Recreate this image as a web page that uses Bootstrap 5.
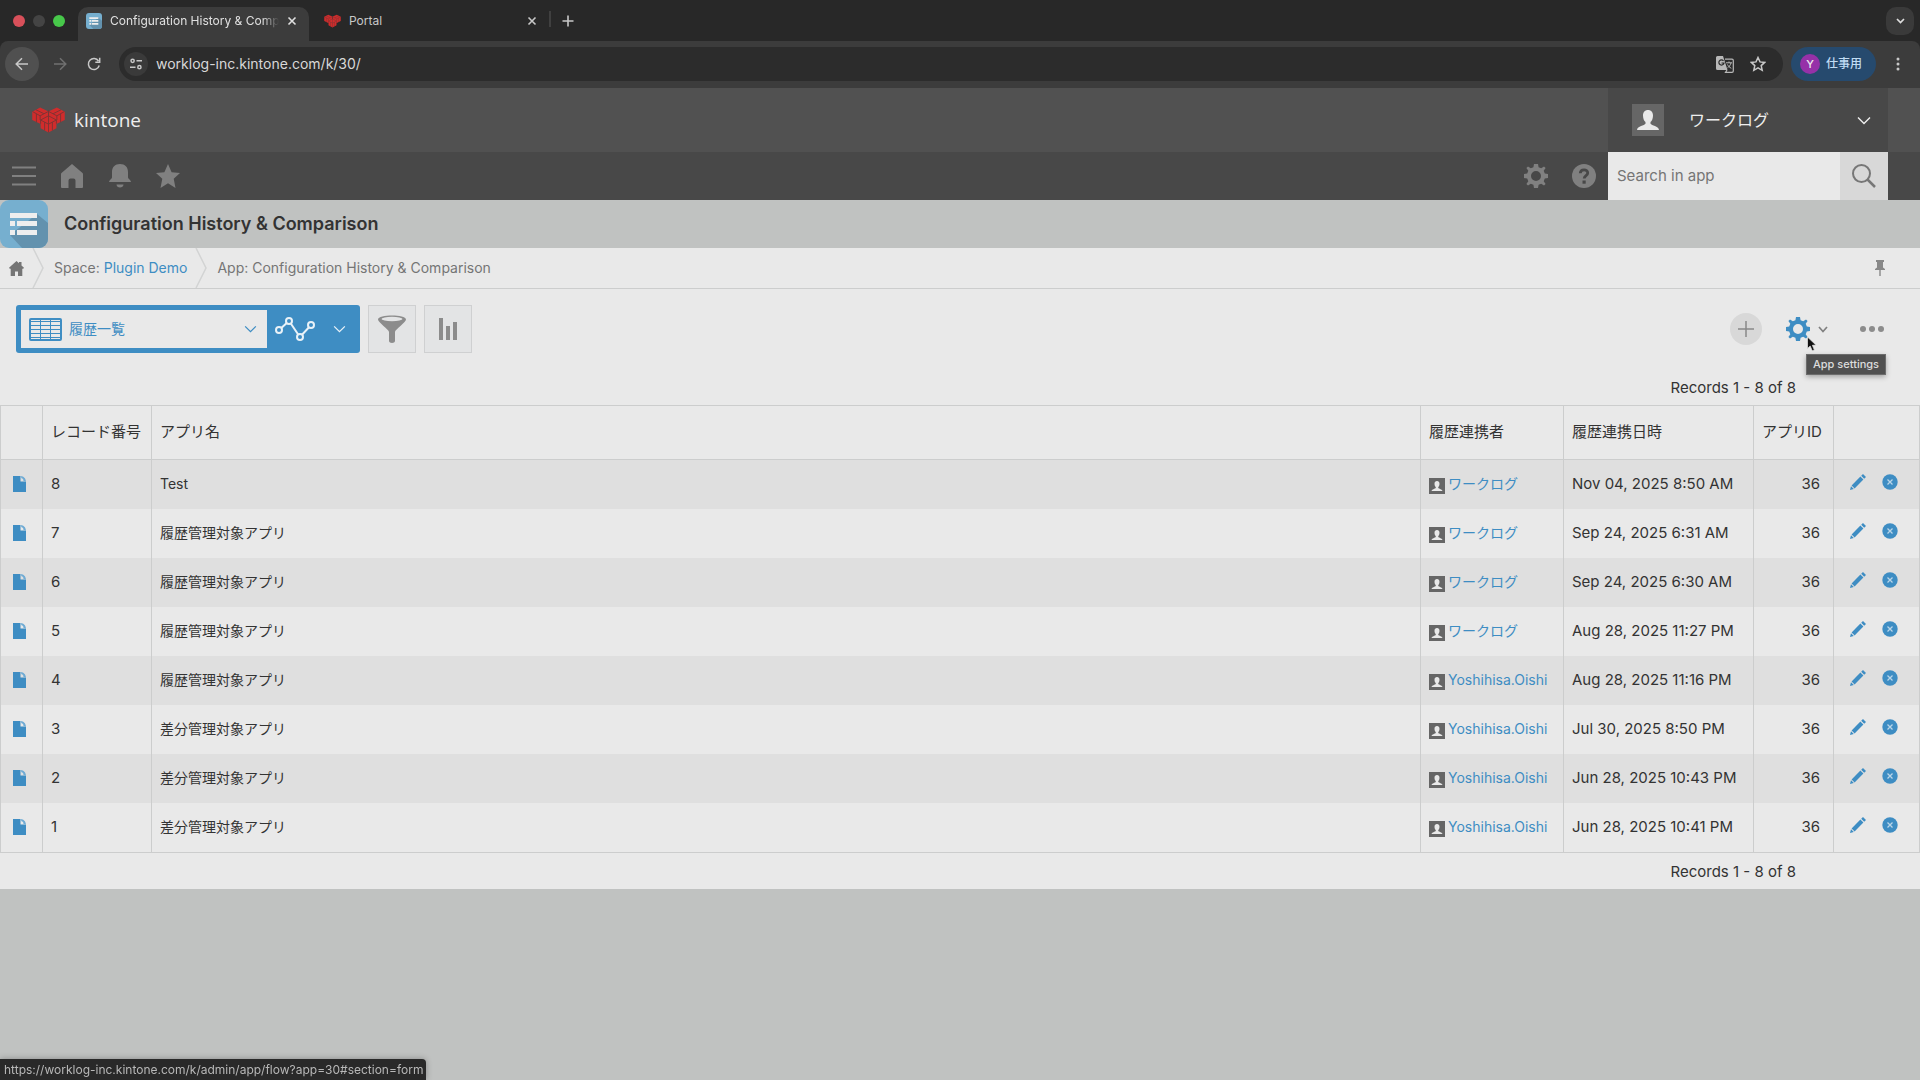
<!DOCTYPE html>
<html lang="ja">
<head>
<meta charset="utf-8">
<meta name="viewport" content="width=device-width, initial-scale=1">
<title>Configuration History &amp; Comparison</title>
<link href="https://cdn.jsdelivr.net/npm/bootstrap@5.3.0/dist/css/bootstrap.min.css" rel="stylesheet">
<style>
  :root { --kt-blue: #3e8dc3; --kt-panel: #e9e9e9; --kt-line: #cccdcd; --kt-grey: #c0c2c1; }
  body { font-family: Inter, "Noto Sans CJK JP", sans-serif; font-size: 14px; line-height: 20px; background: var(--kt-grey); color: #333; min-height: 100vh; }
  svg { display: block; flex: none; }
  button { border: 0; background: none; padding: 0; color: inherit; font: inherit; }
  a { color: var(--kt-blue); text-decoration: none; }

  .tabstrip { background: #282828; height: 41px; color: #c8c8c8; font-size: 12px; padding: 7px 6px 0 13px; }
  .lights { gap: 8px; height: 27px; width: 65px; }
  .light { width: 12px; height: 12px; border-radius: 50%; background: #444; }
  .light-close { background: #d8505a; }
  .light-zoom { background: #47c84a; }
  .browser-tab { height: 34px; padding: 0 8px 7px; gap: 8px; }
  .tab-current { width: 231px; background: #3c3c3c; border-radius: 10px 10px 0 0; color: #e0e0e0; }
  .tab-other { width: 240px; padding-left: 15px; }
  .tab-title { overflow: hidden; white-space: nowrap; flex: 1; min-width: 0; text-align: left; }
  .tab-current .tab-title { -webkit-mask-image: linear-gradient(90deg, #000 90%, transparent); mask-image: linear-gradient(90deg, #000 90%, transparent); }
  .tab-rule { width: 2px; height: 16px; background: #404040; margin-bottom: 7px; }
  .tab-new { width: 34px; height: 27px; }
  .tab-list { width: 28px; height: 28px; border-radius: 10px; background: #3a3a3a; }

  .addressbar-back { background: #282828; }
  .addressbar { background: #3c3c3c; height: 47px; padding: 0 16px 1px 5px; border-radius: 8px 8px 0 0; color: #c8c8c8; }
  .round-btn { width: 34px; height: 34px; border-radius: 50%; }
  .round-btn.on { background: #505050; }
  .omnibox { background: #2c2c2c; height: 34px; border-radius: 17px; padding: 0 17px 0 5px; }
  .site-info { width: 24px; height: 24px; border-radius: 50%; background: #3a3a3a; }
  .omnibox input { background: none; border: 0; outline: 0; color: #d8d8d8; padding: 0; min-width: 0; }
  .profile { height: 34px; width: 85px; border-radius: 17px; background: #264a6e; color: #c0dcf4; font-size: 12px; font-weight: 500; padding-left: 9px; gap: 6px; }
  .profile-dot { width: 20px; height: 20px; border-radius: 50%; background: #9631a8; color: #eee; font-size: 11px; }

  .brandbar { background: #515151; height: 64px; padding: 0 32px 0 31px; color: #eee; }
  .brand { font-family: "Open Sans", sans-serif; font-size: 19px; color: #eee; gap: 8px; }
  .account { width: 280px; background: #484848; font-size: 16px; padding: 0 17px 0 24px; }
  .account .name { margin-left: 25px; }
  .navstrip { background: #484848; height: 48px; padding-right: 32px; color: #808080; }
  .nav-btn { width: 48px; height: 48px; }
  .searchbox { width: 280px; font-size: 15px; }
  .searchbox input { background: var(--kt-panel); border: 0; padding: 0 9px; outline: 0; min-width: 0; border-radius: 0; }
  .searchbox input::placeholder { color: #757575; opacity: 1; }
  .searchbox button { width: 48px; flex: none; background: #d8d8d8; color: #777; }

  .app-title { height: 48px; }
  .app-title h1 { font-size: 18px; line-height: 24px; font-weight: 600; margin: 0 0 0 16px; }
  .crumbs { background: var(--kt-panel); height: 41px; border-bottom: 1px solid var(--kt-line); font-size: 14px; color: #757575; padding-right: 30px; }
  .crumbs ol { list-style: none; margin: 0; padding: 0 0 0 9px; height: 40px; }
  .crumbs li { display: flex; align-items: center; line-height: 18px; }
  .crumbs .sep { margin: 0 10px 0 8px; }

  .panel-area { background: var(--kt-panel); }
  .viewbar { padding: 16px 36px 0 16px; gap: 8px; }
  .view-switch { background: var(--kt-blue); height: 48px; width: 344px; border-radius: 3px; padding: 5px 14px 5px 5px; color: #e9f2f8; }
  .view-pick { width: 246px; height: 38px; background: var(--kt-panel); color: var(--kt-blue); padding: 0 10px 0 8px; }
  .view-pick select { appearance: none; border: 0; background: none; color: inherit; font: inherit; padding: 0 0 0 7px; outline: 0; }
  .square-btn { width: 48px; height: 48px; background: #e3e4e5; border: 1px solid #cfd0d1; color: #8c8c8c; }
  .add-btn { width: 32px; height: 32px; border-radius: 50%; background: #d8d8d8; color: #888; }
  .count { font-size: 15px; padding: 0 124px 0 0; text-align: right; }
  .count-top { padding-top: 25px; padding-bottom: 7px; }
  .count-end { padding-top: 9px; padding-bottom: 7px; }
  .gear-wrap { position: relative; }
  .tip { position: absolute; top: 37px; left: 44px; z-index: 2; background: #505050; border: 1px solid #6c6c6c; color: #dcdcdc; font-size: 11px; font-weight: 500; line-height: 19px; padding: 0 6px; white-space: nowrap; box-shadow: 0 2px 5px rgba(0,0,0,.3); }
  .pointer { position: absolute; left: 44px; top: 19px; z-index: 3; }

  .records { width: 100%; table-layout: fixed; border-collapse: collapse; }
  .records th, .records td { border: 1px solid var(--kt-line); border-width: 0 1px; padding: 0 8px; }
  .records th { height: 54px; font-size: 15px; font-weight: 400; padding: 0 8px 2px; border-width: 1px; white-space: nowrap; }
  .records td { height: 49px; white-space: nowrap; padding-bottom: 1px; }
  .records tbody tr:nth-child(odd) { background: #dfdfdf; }
  .records tbody tr:last-child td { height: 50px; border-bottom-width: 1px; }
  .c-open { width: 42px; } .c-num { width: 109px; } .c-who { width: 143px; } .c-when { width: 190px; } .c-app { width: 80px; } .c-act { width: 86px; }
  .records td.num { text-align: right; padding-right: 13px; font-size: 15px; }
  .records td.txt { font-size: 15px; }
  .records td.open { padding-left: 12px; }
  .who { gap: 3px; }
  .acts { gap: 16px; padding: 0 0 3px 8px; color: var(--kt-blue); }

  .status-url { position: fixed; left: 0; bottom: 0; width: 426px; height: 21px; background: #292929; color: #b8b8b8; font-size: 12px; line-height: 21px; padding-left: 4px; border-top-right-radius: 4px; white-space: nowrap; box-shadow: 0 0 6px rgba(0,0,0,.3); }
</style>
</head>
<body>
<svg width="0" height="0" class="position-absolute" aria-hidden="true">
  <defs>
    <symbol id="i-x" viewBox="0 0 10 10"><path d="M1.500 1.500l7 7M8.500 1.500l-7 7" stroke="currentColor" stroke-width="1.600" fill="none"/></symbol>
    <symbol id="i-down" viewBox="0 0 14 9"><path d="M1 1.500l6 6 6-6" stroke="currentColor" stroke-width="1.400" fill="none"/></symbol>
    <symbol id="i-heart" viewBox="0 0 36 28">
      <g fill="#d02c2c"><path d="M9 .5L17.500 4.500V14L9 18 .5 14V5z"/><path d="M27 .5L35.500 5v9L27 18l-8.500-4V4.500z"/></g>
      <path d="M18 9.500l8.500 4.500v9L18 27.500 9.500 23v-9z" fill="#d02c2c"/>
      <path d="M1 5l8 4.500L17.500 5M9 9.500V14M35 5l-8 4.500L18.500 5M27 9.500V14M4.500 3l8.500 4.200M31.500 3L23 7.200M18 3.500v6M9.500 18v-4l8.500-4.500 8.500 4.500v4M9.500 14l8.500 4.500 8.500-4.500M18 9.500v18M5 7.500v9M31 7.500v9M13.800 16.200v9M22.200 16.200v9" stroke="#7d3333" stroke-width="1" fill="none"/>
    </symbol>
    <symbol id="i-app" viewBox="0 0 48 48">
      <rect width="48" height="48" rx="9" fill="#76afcf"/>
      <path d="M37 14l11 9v16a9 9 0 0 1-9 9H22L10 35z" fill="#6392ae"/>
      <path d="M10 13h27v5H10zM10 21h5v5h-5zM17 21h20v5H17zM10 30h5v5h-5zM17 30h20v5H17z" fill="#eee"/>
    </symbol>
    <symbol id="i-gear" viewBox="0 0 24 24"><path fill="currentColor" fill-rule="evenodd" d="M10 0h4l.6 3.200 2.600 1.100L20 2.400 21.600 4l-1.900 2.800 1.100 2.600L24 10v4l-3.200.6-1.100 2.600 1.900 2.800-1.600 1.600-2.800-1.900-2.600 1.100L14 24h-4l-.6-3.200-2.600-1.100L4 21.600 2.400 20l1.900-2.800-1.100-2.600L0 14v-4l3.200-.6 1.100-2.600L2.400 4 4 2.400l2.800 1.900 2.600-1.100zM12 7a5 5 0 1 0 0 10 5 5 0 0 0 0-10z"/></symbol>
    <symbol id="i-person" viewBox="0 0 32 32"><rect width="32" height="32" fill="#666"/><path fill="#e9e9e9" d="M16 6c3 0 5 2.200 5 5.500 0 3-1 5.300-2.500 6.500v1.800c1 1.800 8 2.200 8.500 6.200H5c.5-4 7.500-4.400 8.500-6.200V18C12 16.800 11 14.500 11 11.500 11 8.200 13 6 16 6z"/></symbol>
    <symbol id="i-file" viewBox="0 0 13 16"><path fill="var(--kt-blue)" d="M0 0h7.500v5.500H13V16H0z"/><path d="M7.500 0C11 .5 12.500 2 13 5.500L10.500 5c0-2-.8-2.600-2-2.800z" fill="#6fabd4"/></symbol>
    <symbol id="i-pencil" viewBox="0 0 16 16"><path fill="currentColor" d="M13 0l3 3-1.800 1.800-3-3zM10.400 2.600l3 3L4.600 14.400l-3-3zM1 12.200L3.800 15 0 16z"/></symbol>
    <symbol id="i-del" viewBox="0 0 16 16"><circle cx="8" cy="8" r="7.700" fill="currentColor"/><path d="M5.500 5.500l5 5M10.500 5.500l-5 5" stroke="#b9d5e8" stroke-width="1.300"/></symbol>
    <symbol id="i-sep" viewBox="0 0 12 40"><path d="M1 0l10 20L1 40" fill="none" stroke="#d2d3d3" stroke-width="1.500"/></symbol>
  </defs>
</svg>

<header>
  <div class="tabstrip d-flex align-items-start">
    <div class="lights d-flex align-items-center"><span class="light light-close"></span><span class="light"></span><span class="light light-zoom"></span></div>
    <div class="browser-tab tab-current d-flex align-items-center">
      <svg width="16" height="16"><use href="#i-app"/></svg>
      <span class="tab-title">Configuration History &amp; Comparison</span>
      <button type="button" aria-label="Close tab" class="me-1"><svg width="10" height="10"><use href="#i-x"/></svg></button>
    </div>
    <div class="browser-tab tab-other d-flex align-items-center">
      <svg width="17" height="14"><use href="#i-heart"/></svg>
      <span class="tab-title">Portal</span>
      <button type="button" aria-label="Close tab" class="me-1"><svg width="10" height="10"><use href="#i-x"/></svg></button>
    </div>
    <div class="d-flex align-items-center"><span class="tab-rule mt-1"></span>
      <button type="button" aria-label="New tab" class="tab-new d-flex align-items-center justify-content-center"><svg width="12" height="12" viewBox="0 0 12 12"><path d="M6 .5v11M.5 6h11" stroke="currentColor" stroke-width="1.600"/></svg></button>
    </div>
    <button type="button" aria-label="Search tabs" class="tab-list ms-auto d-flex align-items-center justify-content-center"><svg width="9" height="6" viewBox="0 0 9 6"><path d="M1 1l3.500 3.500L8 1" stroke="#ddd" stroke-width="1.700" fill="none"/></svg></button>
  </div>
  <div class="addressbar-back">
  <div class="addressbar d-flex align-items-center">
    <button type="button" aria-label="Back" class="round-btn on d-flex align-items-center justify-content-center"><svg width="14" height="14" viewBox="0 0 14 14"><path d="M13 7H1.500M7 1.200L1.200 7 7 12.800" stroke="currentColor" stroke-width="1.500" fill="none"/></svg></button>
    <button type="button" aria-label="Forward" class="round-btn ms-1 d-flex align-items-center justify-content-center"><svg width="14" height="14" viewBox="0 0 14 14"><path d="M1 7h11.500M7 1.200L12.800 7 7 12.800" stroke="#707070" stroke-width="1.500" fill="none"/></svg></button>
    <button type="button" aria-label="Reload" class="round-btn d-flex align-items-center justify-content-center"><svg width="14" height="14" viewBox="0 0 14 14"><path d="M12.200 8.500A5.500 5.500 0 1 1 11.500 4M12.700.8v4.400H8.300" stroke="currentColor" stroke-width="1.500" fill="none"/></svg></button>
    <div class="omnibox d-flex align-items-center flex-grow-1 ms-2">
      <button type="button" aria-label="Site information" class="site-info d-flex align-items-center justify-content-center"><svg width="12" height="12" viewBox="0 0 12 12"><g fill="none" stroke="currentColor" stroke-width="1.500"><circle cx="2.600" cy="2.800" r="1.600"/><path d="M6.500 2.800H12M0 9.200h5.500"/><circle cx="9.400" cy="9.200" r="1.600"/></g></svg></button>
      <input type="text" class="flex-grow-1 ms-2" aria-label="Address" value="worklog-inc.kintone.com/k/30/">
      <button type="button" aria-label="Translate" class="me-3"><svg width="18" height="17" viewBox="0 0 18 17"><path d="M1.500 0H7l4.500 14h-10A1.500 1.500 0 0 1 0 12.500v-11A1.500 1.500 0 0 1 1.500 0z" fill="#b8b8b8"/><path d="M7.500 4.800A2.600 2.600 0 1 0 8 7H5.500" fill="none" stroke="#2c2c2c" stroke-width="1.200"/><path d="M9 3.200h7a1.300 1.300 0 0 1 1.300 1.300V15a1.300 1.300 0 0 1-1.300 1.300H9.500L11 14" fill="none" stroke="#b8b8b8" stroke-width="1.200"/><path d="M10 6.800h6M13 5.500v1.300M15 6.800c-.6 2.600-2 4-3.500 5M11.500 8.500c.8 1.600 2 2.800 3.800 3.800" fill="none" stroke="#b8b8b8"/></svg></button>
      <button type="button" aria-label="Bookmark"><svg width="16" height="16" viewBox="0 0 16 16"><path d="M8 1.500l2 4.400 4.700.5-3.500 3.200 1 4.700L8 11.900l-4.200 2.400 1-4.700L1.300 6.400 6 5.900z" fill="none" stroke="#c8c8c8" stroke-width="1.500"/></svg></button>
    </div>
    <button type="button" class="profile d-flex align-items-center ms-2"><span class="profile-dot d-flex align-items-center justify-content-center">Y</span>仕事用</button>
    <button type="button" aria-label="Menu" class="ms-3 px-1"><svg width="4" height="14" viewBox="0 0 4 14" fill="#c8c8c8"><circle cx="2" cy="2" r="1.500"/><circle cx="2" cy="7" r="1.500"/><circle cx="2" cy="12" r="1.500"/></svg></button>
  </div>
  </div>
</header>

<div class="brandbar d-flex justify-content-between">
  <a href="#" class="brand d-flex align-items-center"><svg width="35" height="26"><use href="#i-heart"/></svg>kintone</a>
  <button type="button" class="account d-flex align-items-center"><svg width="32" height="32"><use href="#i-person"/></svg><span class="name">ワークログ</span><svg class="ms-auto" width="14" height="9"><use href="#i-down"/></svg></button>
</div>

<nav class="navstrip d-flex" aria-label="Main">
  <button type="button" aria-label="Menu" class="nav-btn d-flex align-items-center justify-content-center"><svg width="24" height="20" viewBox="0 0 24 20"><path d="M0 1.500h24M0 10h24M0 18.500h24" stroke="currentColor" stroke-width="2"/></svg></button>
  <button type="button" aria-label="Home" class="nav-btn d-flex align-items-center justify-content-center"><svg width="22" height="24" viewBox="0 0 22 24"><path fill="currentColor" d="M11 0l10.500 9c.3.300.5.700.5 1.200V23a1 1 0 0 1-1 1h-6.500v-7.500a2 2 0 0 0-2-2h-3a2 2 0 0 0-2 2V24H1a1 1 0 0 1-1-1V10.200C0 9.700.2 9.300.5 9z"/></svg></button>
  <button type="button" aria-label="Notifications" class="nav-btn d-flex align-items-center justify-content-center"><svg width="22" height="24" viewBox="0 0 22 24"><path fill="currentColor" d="M11 0c5 0 8 3 8 8v5.500c0 1.500 3 2.500 3 4.500H0c0-2 3-3 3-4.500V8c0-5 3-8 8-8zM7.500 20.500h7c0 4-7 4-7 0z"/></svg></button>
  <button type="button" aria-label="Favourites" class="nav-btn d-flex align-items-center justify-content-center"><svg width="24" height="24" viewBox="0 0 24 24"><path fill="currentColor" d="M12 0l3.600 8.200 8.400.9-6.300 5.700L19.500 24 12 19.200 4.500 24l1.800-9.200L0 9.100l8.400-.9z"/></svg></button>
  <button type="button" aria-label="Settings" class="nav-btn ms-auto d-flex align-items-center justify-content-center"><svg width="24" height="24"><use href="#i-gear"/></svg></button>
  <button type="button" aria-label="Help" class="nav-btn d-flex align-items-center justify-content-center"><svg width="24" height="24" viewBox="0 0 24 24"><circle cx="12" cy="12" r="12" fill="currentColor"/><path d="M8.300 9.200c.1-4.500 7.500-4.400 7.400-.3 0 2.700-3.500 2.600-3.500 5.600" fill="none" stroke="#484848" stroke-width="2.800"/><rect x="10.500" y="16.500" width="3.200" height="3.200" fill="#484848"/></svg></button>
  <form class="searchbox d-flex">
    <input type="search" class="flex-grow-1" placeholder="Search in app" aria-label="Search in app">
    <button type="button" aria-label="Search" class="d-flex align-items-center justify-content-center"><svg width="24" height="24" viewBox="0 0 24 24"><circle cx="9.500" cy="9.500" r="8.500" fill="none" stroke="currentColor" stroke-width="2"/><path d="M15.500 15.500l7.500 7.500" stroke="currentColor" stroke-width="2.500"/></svg></button>
  </form>
</nav>

<div class="app-title d-flex align-items-center"><svg width="48" height="48"><use href="#i-app"/></svg><h1>Configuration History &amp; Comparison</h1></div>

<nav class="crumbs d-flex align-items-center justify-content-between" aria-label="Breadcrumb">
  <ol class="d-flex">
    <li><a href="#" aria-label="Home"><svg width="15" height="15" viewBox="0 0 15 15"><path fill="#757575" d="M7.500 0L10 2.200V1h2.500v3.500L15 6.800l-1 1.200-.7-.5V15H9v-4.500H6V15H1.700V7.500L1 8 0 6.800z"/></svg></a><svg class="sep" width="12" height="40"><use href="#i-sep"/></svg></li>
    <li>Space:&nbsp;<a href="#">Plugin Demo</a><svg class="sep" width="12" height="40"><use href="#i-sep"/></svg></li>
    <li>App: Configuration History &amp; Comparison</li>
  </ol>
  <button type="button" aria-label="Pin"><svg width="20" height="16" viewBox="0 0 20 16"><path fill="#888" d="M6 0h8v2h-1v5.500l2 1.500v1h-4.300v6H9.300v-6H5V9l2-1.500V2H6z"/></svg></button>
</nav>

<main class="panel-area">
  <div class="viewbar d-flex align-items-center">
    <div class="view-switch d-flex align-items-center">
      <label class="view-pick d-flex align-items-center"><svg width="33" height="23" viewBox="0 0 33 23"><rect x="1" y="1" width="31" height="21" rx="1" fill="#e9e9e9" stroke="currentColor" stroke-width="2"/><path d="M1 3.500h31M1 7.500h31M1 11.500h31M1 15.500h31M1 19.500h31M11.500 1v21M21.500 1v21" stroke="currentColor"/></svg><select class="flex-grow-1" aria-label="View"><option>履歴一覧</option></select><svg width="13" height="8"><use href="#i-down"/></svg></label>
      <button type="button" class="d-flex align-items-center flex-grow-1 justify-content-between ps-2" aria-label="Graphs"><svg width="40" height="26" viewBox="0 0 40 26"><g fill="none" stroke="currentColor" stroke-width="2"><circle cx="4" cy="14" r="3"/><circle cx="14" cy="5" r="3"/><circle cx="25" cy="21" r="3"/><circle cx="36" cy="9" r="3"/><path d="M6.300 12l5.400-5M15.800 7.500l7.400 11M27 18.700l7-7.400"/></g></svg><svg width="13" height="8"><use href="#i-down"/></svg></button>
    </div>
    <button type="button" aria-label="Filter" class="square-btn d-flex align-items-center justify-content-center"><svg width="28" height="28" viewBox="0 0 28 28"><path fill="currentColor" d="M0 4.500C0-.8 28-.8 28 4.500c0 3-11 10-11 12.500v9c0 2.500-6 2.500-6 0v-9C11 14.500 0 7.500 0 4.500z"/><ellipse cx="14" cy="4" rx="10.500" ry="2.200" fill="#e3e4e5"/></svg></button>
    <button type="button" aria-label="Chart" class="square-btn d-flex align-items-center justify-content-center"><svg width="18" height="22" viewBox="0 0 18 22"><path fill="currentColor" d="M0 0h4v22H0zM7 8h4v14H7zM14 4h4v18h-4z"/></svg></button>
    <div class="ms-auto d-flex align-items-center">
      <button type="button" aria-label="Add record" class="add-btn d-flex align-items-center justify-content-center"><svg width="16" height="16" viewBox="0 0 16 16"><path d="M8 0v16M0 8h16" stroke="currentColor" stroke-width="1.500"/></svg></button>
      <div class="gear-wrap d-flex align-items-center">
        <button type="button" class="d-flex align-items-center ps-4" aria-label="App settings"><svg width="24" height="24" color="#3e8dc3"><use href="#i-gear"/></svg><svg class="ms-2" width="10" height="7" viewBox="0 0 10 7"><path d="M1 1l4 4.500L9 1" stroke="#808080" stroke-width="1.700" fill="none"/></svg></button>
        <span class="tip" role="tooltip">App settings</span>
        <svg class="pointer" width="12" height="16" viewBox="0 0 12 16"><path d="M1.500 1v11.500l2.700-2.400 2 4.700 2.200-.9-2-4.600 3.600-.2z" fill="#111" stroke="#ddd" stroke-width=".8"/></svg>
      </div>
      <button type="button" aria-label="More" class="ms-4"><svg class="ms-2" width="24" height="6" viewBox="0 0 24 6" fill="#8c8c8c"><circle cx="3" cy="3" r="3"/><circle cx="12" cy="3" r="3"/><circle cx="21" cy="3" r="3"/></svg></button>
    </div>
  </div>
  <div class="count count-top">Records 1 - 8 of 8</div>
  <table class="records">
    <colgroup><col class="c-open"><col class="c-num"><col><col class="c-who"><col class="c-when"><col class="c-app"><col class="c-act"></colgroup>
    <thead><tr><th></th><th>レコード番号</th><th>アプリ名</th><th>履歴連携者</th><th>履歴連携日時</th><th>アプリID</th><th></th></tr></thead>
    <tbody id="rows"></tbody>
  </table>
  <div class="count count-end">Records 1 - 8 of 8</div>
</main>
<div class="status-url">https://worklog-inc.kintone.com/k/admin/app/flow?app=30#section=form</div>

<script src="https://cdn.jsdelivr.net/npm/bootstrap@5.3.0/dist/js/bootstrap.bundle.min.js"></script>
<script>
  const records = [
    [8, "Test", "ワークログ", "Nov 04, 2025 8:50 AM"],
    [7, "履歴管理対象アプリ", "ワークログ", "Sep 24, 2025 6:31 AM"],
    [6, "履歴管理対象アプリ", "ワークログ", "Sep 24, 2025 6:30 AM"],
    [5, "履歴管理対象アプリ", "ワークログ", "Aug 28, 2025 11:27 PM"],
    [4, "履歴管理対象アプリ", "Yoshihisa.Oishi", "Aug 28, 2025 11:16 PM"],
    [3, "差分管理対象アプリ", "Yoshihisa.Oishi", "Jul 30, 2025 8:50 PM"],
    [2, "差分管理対象アプリ", "Yoshihisa.Oishi", "Jun 28, 2025 10:43 PM"],
    [1, "差分管理対象アプリ", "Yoshihisa.Oishi", "Jun 28, 2025 10:41 PM"]
  ];
  document.getElementById("rows").innerHTML = records.map(([id, app, who, when]) => `
    <tr>
      <td class="open"><a href="#" aria-label="Open record ${id}"><svg width="13" height="16"><use href="#i-file"/></svg></a></td>
      <td class="txt">${id}</td><td>${app}</td>
      <td><a href="#" class="who d-flex align-items-center"><svg class="mt-1" width="16" height="16"><use href="#i-person"/></svg>${who}</a></td>
      <td class="txt">${when}</td><td class="num">36</td>
      <td><div class="acts d-flex align-items-center"><button type="button" aria-label="Edit"><svg width="16" height="16"><use href="#i-pencil"/></svg></button><button type="button" aria-label="Delete"><svg width="16" height="16"><use href="#i-del"/></svg></button></div></td>
    </tr>`).join("");
</script>
</body>
</html>
